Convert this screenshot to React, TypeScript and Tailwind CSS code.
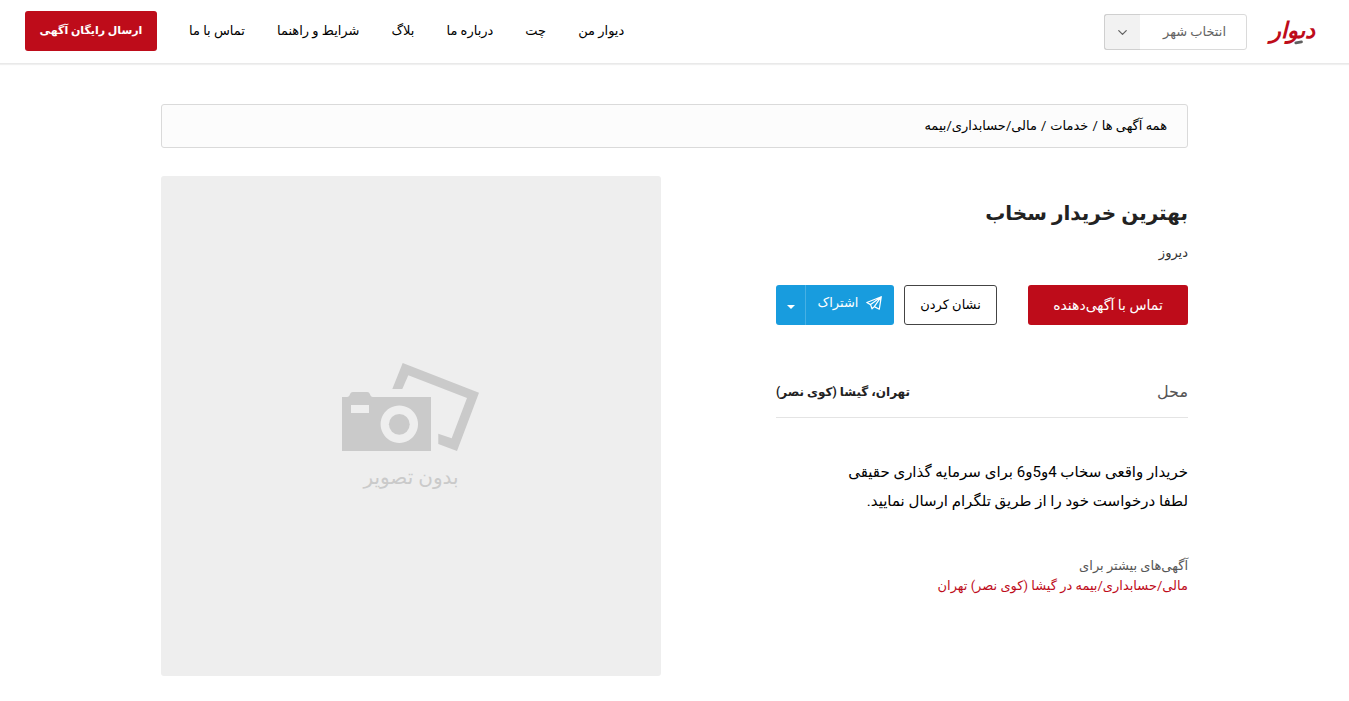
import { useState } from "react";
import { ChevronDown } from "lucide-react";

const navLinks = [
  "دیوار من",
  "چت",
  "درباره ما",
  "بلاگ",
  "شرایط و راهنما",
  "تماس با ما",
];

const breadcrumbs = ["همه آگهی ها", "خدمات", "مالی/حسابداری/بیمه"];

const cities = ["تهران", "مشهد", "اصفهان", "شیراز"];

const Logo = () => (
  <a href="#" aria-label="دیوار" className="flex h-10 w-12 items-center">
    <svg viewBox="0 0 48 34" className="h-8 w-12 overflow-visible">
      <text
        x="24"
        y="23"
        textAnchor="middle"
        direction="rtl"
        fill="#be0c1a"
        className="text-[24px] font-bold italic"
      >
        دىوار
      </text>
      <path
        d="M27 28.500l6 -1"
        stroke="#5f5f5f"
        strokeWidth="3"
        strokeLinecap="round"
      />
    </svg>
  </a>
);

const CitySelect = () => {
  const [city, setCity] = useState("");

  return (
    <div className="relative h-9 w-[143px]">
      <select
        aria-label="انتخاب شهر"
        value={city}
        onChange={(e) => setCity(e.target.value)}
        className="h-full w-full appearance-none rounded-[3px] border border-[#dadada] bg-white pr-5 pl-9 text-[13px] text-[#626262]"
      >
        <option value="">انتخاب شهر</option>
        {cities.map((name) => (
          <option key={name} value={name}>
            {name}
          </option>
        ))}
      </select>
      <span className="pointer-events-none absolute inset-y-0 left-0 flex w-9 items-center justify-center rounded-l-[3px] border border-r-0 border-[#cfcfcf] bg-[#f2f2f2]">
        <ChevronDown size={15} strokeWidth={2} className="text-[#626262]" />
      </span>
    </div>
  );
};

const Header = () => (
  <header className="flex h-16 items-start justify-between border-b border-[#e9e9e9] pr-8 pl-[25px] shadow-[0_1px_1px_rgba(0,0,0,0.06)]">
    <div className="flex items-center gap-[22px] pt-3">
      <Logo />
      <CitySelect />
    </div>
    <div className="flex items-center gap-8 pt-[11px]">
      <nav className="flex gap-8 text-[13px]">
        {navLinks.map((label) => (
          <a key={label} href="#">
            {label}
          </a>
        ))}
      </nav>
      <button className="h-10 w-[132px] rounded-[3px] bg-[#be0c1a] text-[11px] font-bold text-white">
        ارسال رایگان آگهی
      </button>
    </div>
  </header>
);

const NoImage = () => (
  <div className="flex aspect-square w-[500px] flex-col items-center justify-center rounded-[3px] bg-[#eee] pt-[2px] text-[#cacaca]">
    <svg viewBox="0 0 138 88" width="138" height="88" fill="currentColor">
      <path d="M60.700 0L137 29.700L115 88L96.300 81V70.700L109.700 75.300L125 35L66.300 12.300L60.300 26H50.300Z" />
      <path
        fillRule="evenodd"
        d="M0 34H5C9 33.500 7 29 11 29H25C29 29 27 33.500 31 34H89V88H0ZM9 42V50H27V42ZM57.300 42.500a18.700 18.700 0 1 0 0.010 0Z"
      />
      <circle cx="57.300" cy="61.300" r="10.400" />
    </svg>
    <p className="pt-3 text-xl">بدون تصویر</p>
  </div>
);

const ShareButton = () => (
  <div className="flex h-10 text-white">
    <button className="flex w-22 items-center justify-center gap-2 rounded-r-[3px] bg-[#189cde] pb-1 text-[13px]">
      <svg
        viewBox="0 0 16 14"
        width="16"
        height="14"
        fill="none"
        stroke="currentColor"
        strokeWidth="1.200"
        strokeLinejoin="round"
      >
        <path d="M15.300 0.700L0.800 6.500L4.600 8.600L15.300 0.700L13.300 13.200L8.300 10.600L6 12.800L4.600 8.600M8.300 10.600L15.300 0.700" />
      </svg>
      اشتراک
    </button>
    <button
      aria-label="گزینه‌های اشتراک"
      className="flex w-[30px] items-center justify-center rounded-l-[3px] border-r border-[#46b0e4] bg-[#189cde] pt-1"
    >
      <svg viewBox="0 0 8 4" width="8" height="4" fill="currentColor">
        <path d="M0 0H8L4 4Z" />
      </svg>
    </button>
  </div>
);

const PostDetails = () => (
  <section className="w-[412px] pt-[21px]">
    <h1 className="text-xl leading-8 font-bold text-[#222]">
      بهترین خریدار سخاب
    </h1>
    <p className="pt-3 text-[13px] leading-6 text-[#333]">دیروز</p>
    <div className="flex justify-between pt-5">
      <button className="h-10 w-40 rounded-[3px] bg-[#be0c1a] text-sm text-white">
        تماس با آگهی‌دهنده
      </button>
      <div className="flex gap-[10px]">
        <button className="h-10 w-[93px] rounded-[3px] border border-[#444] text-[13px]">
          نشان کردن
        </button>
        <ShareButton />
      </div>
    </div>
    <dl className="mt-10 flex items-center justify-between border-b border-[#e4e4e4] pt-[15px] pb-[13px]">
      <dt className="text-base text-[#555]">محل</dt>
      <dd className="text-xs font-bold text-[#222]">
        تهران، گیشا (کوی نصر)
      </dd>
    </dl>
    <p className="pt-10 text-[15px] leading-[29px]">
      خریدار واقعی سخاب 4و5و6 برای سرمایه گذاری حقیقی
      <br />
      لطفا درخواست خود را از طریق تلگرام ارسال نمایید.
    </p>
    <div className="pt-10 text-[13px] leading-5">
      <p className="text-[#555]">آگهی‌های بیشتر برای</p>
      <a href="#" className="text-[#be0c1a]">
        مالی/حسابداری/بیمه در گیشا (کوی نصر) تهران
      </a>
    </div>
  </section>
);

const App = () => {
  return (
    <div
      dir="rtl"
      className="min-h-screen bg-white font-['Roboto','DejaVu_Sans',sans-serif] text-black"
    >
      <Header />
      <main className="mx-auto max-w-[1027px] pt-10">
        <nav className="flex h-11 items-center gap-1 rounded-[3px] border border-[#dadada] bg-[#fcfcfc] px-5 text-[13px]">
          {breadcrumbs.map((label, index) => (
            <span key={label} className="flex gap-1">
              {index > 0 && <span>/</span>}
              <a href="#">{label}</a>
            </span>
          ))}
        </nav>
        <div className="flex justify-between pt-7">
          <PostDetails />
          <NoImage />
        </div>
      </main>
    </div>
  );
};

export default App;
